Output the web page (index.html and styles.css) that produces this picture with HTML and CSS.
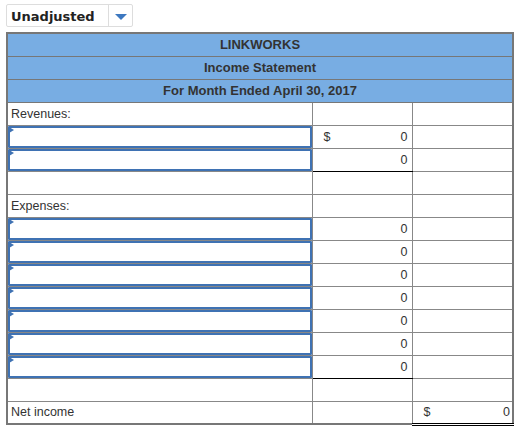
FILE: index.html
```html
<!DOCTYPE html>
<html>
<head>
<meta charset="utf-8">
<link rel="stylesheet" href="styles.css">
</head>
<body>
<div class="select">
  <span class="select-label">Unadjusted</span>
  <span class="select-btn"><span class="caret"></span></span>
</div>
<table class="sheet">
  <colgroup>
    <col class="c1"><col class="c2"><col class="c3">
  </colgroup>
  <tr class="head"><td colspan="3">LINKWORKS</td></tr>
  <tr class="head"><td colspan="3">Income Statement</td></tr>
  <tr class="head"><td colspan="3">For Month Ended April 30, 2017</td></tr>
  <tr><td class="label">Revenues:</td><td></td><td></td></tr>
  <tr><td class="in"><div class="box"><span class="mark"></span></div></td><td class="num"><span class="cur">$</span>0</td><td></td></tr>
  <tr><td class="in"><div class="box"><span class="mark"></span></div></td><td class="num total">0</td><td></td></tr>
  <tr><td></td><td></td><td></td></tr>
  <tr><td class="label">Expenses:</td><td></td><td></td></tr>
  <tr><td class="in"><div class="box"><span class="mark"></span></div></td><td class="num">0</td><td></td></tr>
  <tr><td class="in"><div class="box"><span class="mark"></span></div></td><td class="num">0</td><td></td></tr>
  <tr><td class="in"><div class="box"><span class="mark"></span></div></td><td class="num">0</td><td></td></tr>
  <tr><td class="in"><div class="box"><span class="mark"></span></div></td><td class="num">0</td><td></td></tr>
  <tr><td class="in"><div class="box"><span class="mark"></span></div></td><td class="num">0</td><td></td></tr>
  <tr><td class="in"><div class="box"><span class="mark"></span></div></td><td class="num">0</td><td></td></tr>
  <tr><td class="in"><div class="box"><span class="mark"></span></div></td><td class="num total">0</td><td></td></tr>
  <tr><td></td><td></td><td></td></tr>
  <tr><td class="label">Net income</td><td></td><td class="num grand"><span class="cur2">$</span>0</td></tr>
</table>
</body>
</html>
```
FILE: styles.css
```css
html, body {
  margin: 0;
  padding: 0;
  background: #fff;
}
body {
  padding: 4px 0 0 6px;
  font-family: "Liberation Sans", Arial, sans-serif;
  font-size: 12.5px;
  color: #333;
}
.select {
  display: flex;
  width: 125px;
  height: 21px;
  border: 1px solid #ddd;
  border-radius: 2px;
  box-sizing: content-box;
}
.select-label {
  flex: 1;
  display: flex;
  align-items: center;
  padding-left: 4px;
  padding-top: 1px;
  font-family: "DejaVu Sans", sans-serif;
  font-weight: bold;
  font-size: 13px;
  color: #222;
  border-right: 1px solid #ddd;
}
.select-btn {
  width: 23px;
  display: flex;
  align-items: center;
  justify-content: center;
}
.caret {
  width: 0;
  height: 0;
  border-left: 6px solid transparent;
  border-right: 6px solid transparent;
  border-top: 6px solid #3d78c0;
  margin-top: 2px;
}
.sheet {
  margin-top: 5px;
  border-collapse: collapse;
  table-layout: fixed;
  width: 506px;
  border: 2px solid #777;
}
.c1 { width: 305px; }
.c2 { width: 100px; }
.c3 { width: 101px; }
.sheet td {
  border: 1px solid #888;
  height: 23px;
  padding: 0 3px;
  box-sizing: border-box;
  white-space: nowrap;
}
.head td {
  background: #78ade3;
  text-align: center;
  font-weight: bold;
  font-size: 13px;
  color: #333;
  border-color: #777;
}
.sheet td.label {
  padding-left: 3px;
}
.sheet td.in {
  padding: 0;
}
.box {
  position: relative;
  height: 18px;
  border: 2px solid #3f72b3;
  border-radius: 1px;
}
.mark {
  position: absolute;
  left: -1px;
  top: -1px;
  width: 0;
  height: 0;
  border-top: 3px solid transparent;
  border-bottom: 3px solid transparent;
  border-left: 5px solid #3f72b3;
}
.sheet td.num {
  text-align: right;
  padding-right: 4px;
}
.cur {
  float: left;
  margin-left: 8px;
}
.cur2 {
  float: left;
  margin-left: 8px;
}
.sheet td.total {
  border-bottom: 1px solid #000;
}
.sheet td.grand {
  border-top: 1px solid #000;
  border-bottom: 3px double #000;
  padding-right: 2px;
}
```
